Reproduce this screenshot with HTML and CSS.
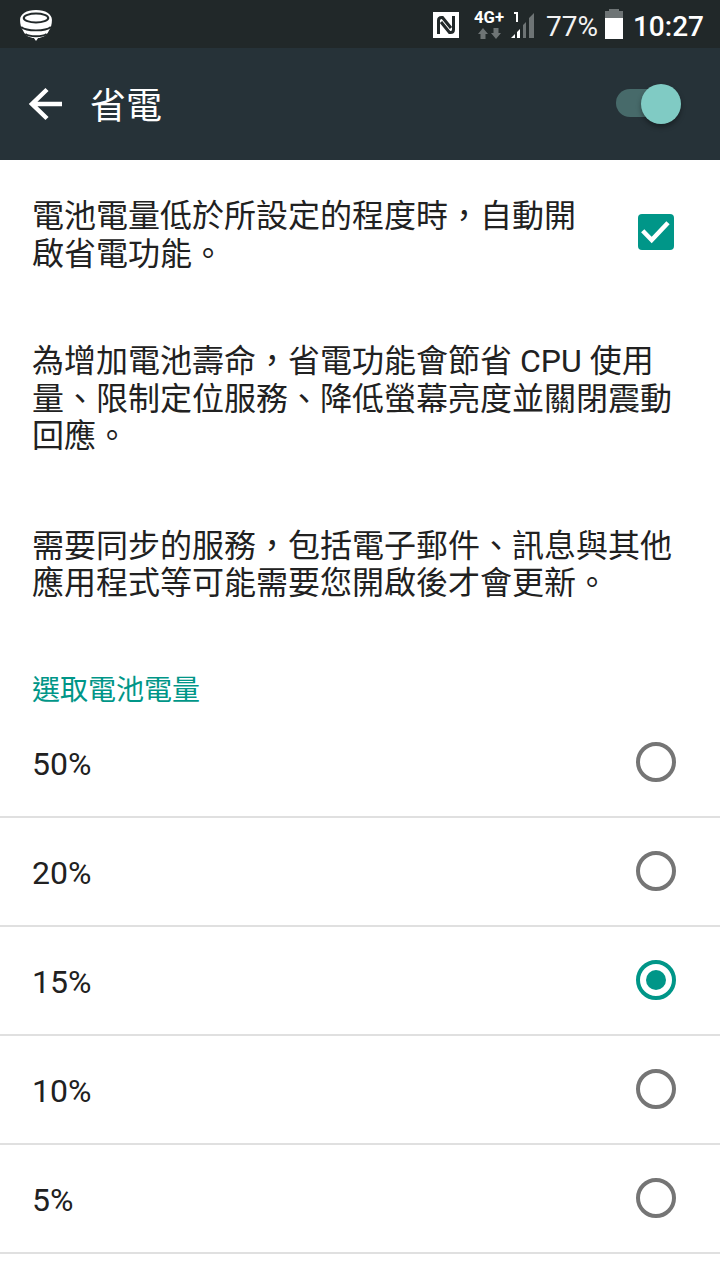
FILE: index.html
```html
<!DOCTYPE html>
<html lang="zh-Hant">
<head>
<meta charset="utf-8">
<title>省電</title>
<link rel="stylesheet" href="styles.css">
</head>
<body>
<div class="status">
  <svg class="logo" width="34" height="36" viewBox="1 0 32 36" preserveAspectRatio="none">
    <path d="M17 3C8 3 2 7 2 13c0 4 1 8 3 11 2 5 7 7 10 7l2 3 2-3c3 0 8-2 10-7 2-3 3-7 3-11 0-6-6-10-15-10z" fill="#fff"/>
    <ellipse cx="17" cy="11" rx="11.500" ry="4.500" fill="#fff" stroke="#212829" stroke-width="2"/>
    <path d="M3 20c5 4.500 23 4.500 28 0M7 27c4 3 16 3 20 0" fill="none" stroke="#212829" stroke-width="1.800"/>
  </svg>
  <div class="status-right">
    <svg class="nfc" width="26" height="26" viewBox="0 0 26 26">
      <path d="M0 0h26v26H0z" fill="#fff"/>
      <path d="M5.500 22V8.500q0-3 3-3h1l8.500 10.500M20.500 4v13.500q0 3-3 3h-1L8 10" fill="none" stroke="#212829" stroke-width="3"/>
    </svg>
    <svg class="net" width="32" height="30" viewBox="0 0 32 30">
      <text x="0" y="14" class="net-text" textLength="30" lengthAdjust="spacingAndGlyphs">4G+</text>
      <path d="M6.500 30v-5H4l5-6 5 6h-2.500v5zM19.500 19v5H17l5 6 5-6h-2.500v-5z" fill="#6e7475"/>
    </svg>
    <svg class="signal" width="26" height="30" viewBox="0 0 26 30">
      <path d="M3 3h4v10H5V5H3z" fill="#fff"/>
      <path d="M0 29l4-4v4zM6 29v-6l3-3v9z" fill="#fff"/>
      <path d="M12 29V16l3-3v16zM18 29V9l5-5v25z" fill="#6e7475"/>
    </svg>
    <span class="pct">77%</span>
    <svg class="batt" width="20" height="30" viewBox="0 0 20 30">
      <path d="M5 0h10v2h4v7H1V2h4z" fill="#6e7475"/>
      <path d="M1 9h18v21H1z" fill="#fff"/>
    </svg>
    <span class="time">10:27</span>
  </div>
</div>
<header class="bar">
  <svg class="back" width="36" height="36" viewBox="0 0 36 36">
    <path d="M35 18H5M20 3.500 5 18l15 14.500" fill="none" stroke="#fff" stroke-width="4.500"/>
  </svg>
  <h1 class="title">省電</h1>
  <div class="switch"><span class="track"></span><span class="thumb"></span></div>
</header>
<main>
  <div class="check-row">
    <p class="para">電池電量低於所設定的程度時，自動開啟省電功能。</p>
    <span class="checkbox">
      <svg width="36" height="36" viewBox="0 0 36 36"><path d="M4.700 16.700l9 9.300L30 8.700" fill="none" stroke="#fff" stroke-width="4.500"/></svg>
    </span>
  </div>
  <p class="para block">為增加電池壽命，省電功能會節省 CPU 使用量、限制定位服務、降低螢幕亮度並關閉震動回應。</p>
  <p class="para block">需要同步的服務，包括電子郵件、訊息與其他應用程式等可能需要您開啟後才會更新。</p>
  <h2 class="section">選取電池電量</h2>
  <ul class="options">
    <li class="option"><span class="label">50%</span><span class="radio"></span></li>
    <li class="option"><span class="label">20%</span><span class="radio"></span></li>
    <li class="option"><span class="label">15%</span><span class="radio on"></span></li>
    <li class="option"><span class="label">10%</span><span class="radio"></span></li>
    <li class="option"><span class="label">5%</span><span class="radio"></span></li>
  </ul>
</main>
</body>
</html>
```
FILE: styles.css
```css
* { box-sizing: border-box; }
html, body { margin: 0; padding: 0; }
body {
  width: 720px;
  height: 1280px;
  overflow: hidden;
  background: #fff;
  color: #212121;
  font-family: Roboto, "Noto Sans CJK TC", sans-serif;
}
.status {
  height: 48px;
  background: #212829;
  display: flex;
  align-items: center;
  justify-content: space-between;
  padding: 0 16px 0 19px;
  color: #fff;
}
.logo { display: block; margin-top: 1px; }
.status-right { display: flex; align-items: center; }
.nfc { margin: 2px 15px 0 0; }
.net { margin-right: 5px; }
.net-text { font: 700 16px Roboto, sans-serif; fill: #fff; }
.signal { margin-right: 9px; }
.pct { font-size: 28px; margin-right: 6px; padding-top: 4px; color: #f2f2f2; }
.batt { margin-right: 9px; }
.time { font-size: 28px; font-weight: 500; padding-top: 4px; }
.bar {
  height: 112px;
  background: #263238;
  display: flex;
  align-items: center;
  padding: 0 39px 0 27px;
  color: #fff;
}
.title {
  margin: 0 0 3px 27px;
  font-size: 36px;
  font-weight: 400;
  flex: 1;
}
.switch { position: relative; width: 65px; height: 40px; }
.track {
  position: absolute;
  left: 0; top: 5px;
  width: 50px; height: 28px;
  border-radius: 14px;
  background: #476a6a;
}
.thumb {
  position: absolute;
  left: 25px; top: 0;
  width: 40px; height: 40px;
  border-radius: 50%;
  background: #80cbc4;
  box-shadow: 0 3px 5px rgba(0,0,0,.35);
}
.para {
  margin: 0;
  font-size: 32px;
  line-height: 37.500px;
}
.check-row {
  display: flex;
  align-items: center;
  justify-content: space-between;
  padding: 38px 46px 0 32px;
}
.check-row .para { width: 550px; }
.checkbox {
  width: 36px; height: 36px;
  border-radius: 4px;
  background: #009688;
  display: block;
  margin-bottom: 7px;
}
.checkbox svg { display: block; }
.block { padding: 0 32px; margin-top: 70px; }
.block + .block { margin-top: 72px; }
.section {
  margin: 70px 0 0;
  padding: 0 32px;
  font-size: 28px;
  font-weight: 400;
  line-height: 36px;
  color: #009688;
}
.options { list-style: none; margin: 0; padding: 0; }
.option {
  height: 109px;
  display: flex;
  align-items: center;
  justify-content: space-between;
  padding: 0 44px 0 32px;
  border-bottom: 2px solid #e0e0e0;
  font-size: 32px;
}
.option:first-child { height: 110px; margin-top: -1px; }
.label { padding-top: 4px; }
.radio {
  width: 40px; height: 40px;
  border-radius: 50%;
  border: 4px solid #757575;
  position: relative;
}
.radio.on { border-color: #009688; }
.radio.on::after {
  content: "";
  position: absolute;
  left: 6px; top: 6px;
  width: 20px; height: 20px;
  border-radius: 50%;
  background: #009688;
}
```
